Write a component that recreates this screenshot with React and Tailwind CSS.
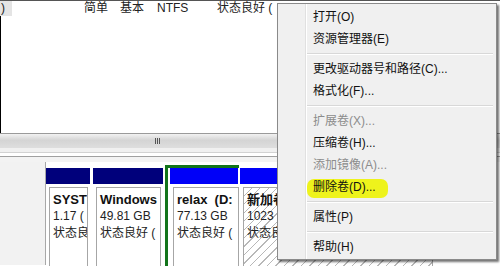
import React from 'react';

const font = "font-['Liberation_Sans','Noto_Sans_CJK_SC',sans-serif]";

const menu = [
  { label: '打开(O)' },
  { label: '资源管理器(E)' },
  { sep: true },
  { label: '更改驱动器号和路径(C)...' },
  { label: '格式化(F)...' },
  { sep: true },
  { label: '扩展卷(X)...', disabled: true },
  { label: '压缩卷(H)...' },
  { label: '添加镜像(A)...', disabled: true },
  { label: '删除卷(D)...', marked: true },
  { sep: true },
  { label: '属性(P)' },
  { sep: true },
  { label: '帮助(H)' },
];

function Partition({ bar, barW, boxW, name, size, status, hatched }) {
  return (
    <div className="flex flex-col shrink-0">
      <div className={`h-[16px] ${bar}`} style={{ width: barW }} />
      <div
        className={`ml-[3px] mt-[3px] h-[90px] overflow-hidden border border-[#a6a6a6] pl-[3px] pt-[3px] leading-[17px] whitespace-pre ${
          hatched
            ? 'bg-[repeating-linear-gradient(135deg,#ffffff_0_5px,#b8b8b8_5px_6px)]'
            : 'bg-white'
        }`}
        style={{ width: boxW }}
      >
        <div className="text-[13px] font-bold text-[#111]">{name}</div>
        <div className="text-[12px] text-[#222]">{size}</div>
        <div className="text-[12px] text-[#222]">{status}</div>
      </div>
    </div>
  );
}

export default function App() {
  return (
    <div className={`relative w-[500px] h-[266px] overflow-hidden bg-white ${font}`}>
      {/* upper list pane */}
      <div className="h-[133px] border-t border-[#555] flex flex-col">
        <div className="h-[15px] flex items-center text-[12px] text-[#222] leading-[15px] whitespace-nowrap">
          <div className="w-[84px] h-full">
            <span className="inline-block w-[12px] h-full bg-[#e4e4e4] pl-[1px]">)</span>
          </div>
          <div className="w-[36px]">简单</div>
          <div className="w-[37px]">基本</div>
          <div className="w-[60px]">NTFS</div>
          <div className="flex-1">状态良好 (</div>
        </div>
        <div className="flex-1 border-l border-black" />
      </div>

      {/* horizontal scrollbar + splitter */}
      <div className="h-[15px] border-t border-[#9a9a9a] bg-[linear-gradient(#f2f2f2,#d4d4d4_45%,#dedede)] flex items-center">
        <div className="ml-[155px] flex gap-[1px]">
          <span className="w-[1px] h-[6px] bg-[#555]" />
          <span className="w-[1px] h-[6px] bg-[#555]" />
          <span className="w-[1px] h-[6px] bg-[#555]" />
        </div>
      </div>
      <div className="h-[5px] bg-[#f0f0f0] border-b border-[#d2d2d2]" />
      <div className="h-[4px] bg-white border-b border-[#a0a0a0]" />

      {/* lower graphical pane */}
      <div className="flex h-[108px] bg-[#f3f3f3] pt-[5px]">
        <div className="w-[46px] shrink-0 border-r border-[#a8a8a8] bg-[#f2f2f2]" />
        <div className="flex-1 flex items-start bg-white pt-[6px]">
          <Partition bar="bg-[#00007b]" barW={44} boxW={39} name="SYST" size="1.17 (" status="状态良" />
          <div className="w-[3px] shrink-0" />
          <Partition bar="bg-[#00007b]" barW={70} boxW={65} name="Windows" size="49.81 GB" status="状态良好 (" />
          <div className="w-[2px] shrink-0" />
          <div className="-mt-[3px] border-l-[3px] border-t-[3px] border-[#12741a] pl-[2px] shrink-0">
            <Partition bar="bg-[#0000f8]" barW={68} boxW={66} name="relax  (D:" size="77.13 GB" status="状态良好 (" />
          </div>
          <div className="w-[1px] shrink-0" />
          <Partition bar="bg-[#0000f8]" barW={200} boxW={190} name="新加卷" size="1023" status="状态良" hatched />
        </div>
      </div>

      {/* context menu */}
      <div className="absolute left-[277px] top-[3px] w-[220px] h-[257px] border border-[#8a8a8a] bg-[#f0f0f0] p-[2px] shadow-[2px_2px_2px_rgba(0,0,0,0.55)]">
        <div className="absolute left-[27px] top-0 bottom-0 w-[2px] border-l border-[#e0e0e0] border-r border-r-white" />
        <div className="relative flex flex-col">
          {menu.map((m, i) =>
            m.sep ? (
              <div key={i} className="h-[8px] flex flex-col justify-center pl-[27px] pr-[1px]">
                <div className="h-[1px] bg-[#d8d8d8]" />
                <div className="h-[1px] bg-white" />
              </div>
            ) : (
              <div
                key={i}
                className={`relative h-[22px] flex items-center pl-[33px] text-[12px] whitespace-nowrap ${
                  m.disabled ? 'text-[#8c8c8c]' : 'text-[#111]'
                }`}
              >
                {m.marked && (
                  <span className="absolute left-[27px] top-[3px] w-[81px] h-[19px] rounded-[7px] bg-[#eef31c] blur-[0.6px]" />
                )}
                <span className="relative">{m.label}</span>
              </div>
            )
          )}
        </div>
      </div>
    </div>
  );
}
